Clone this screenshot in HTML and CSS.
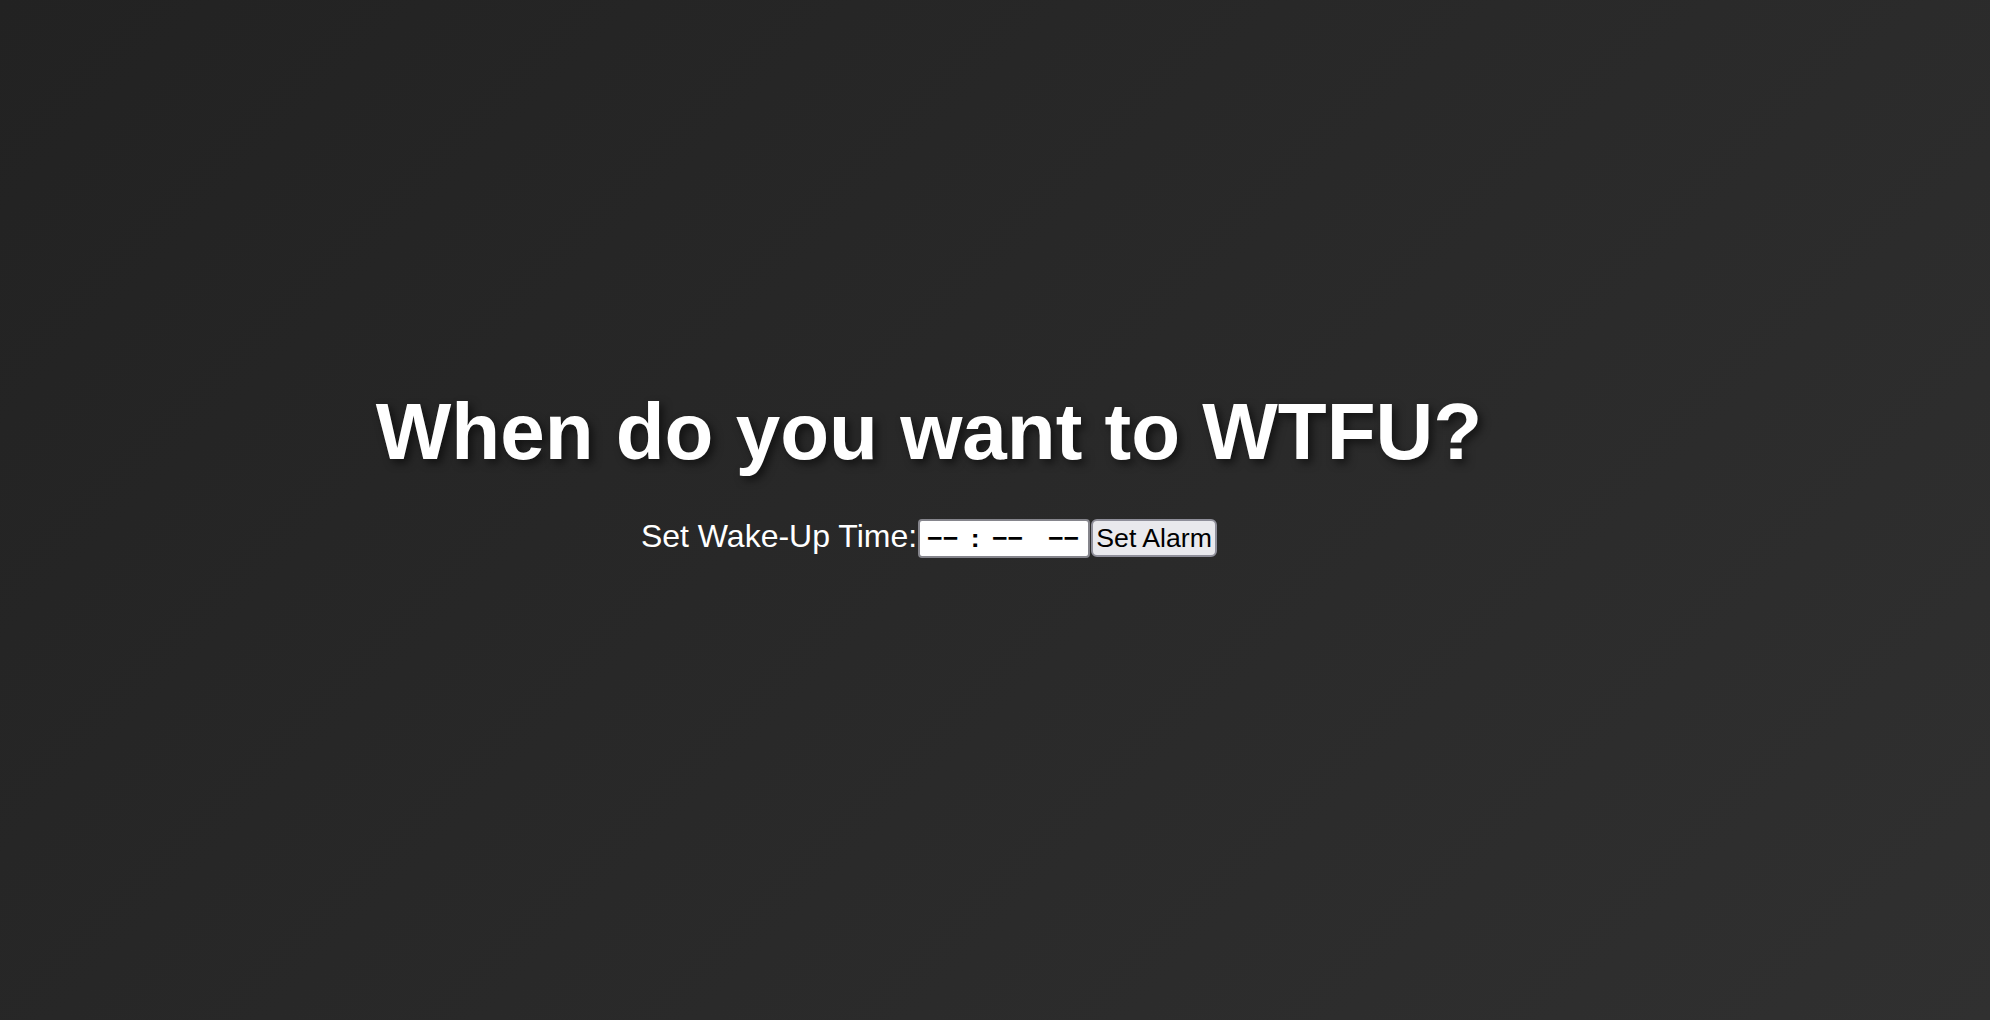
FILE: index.html
```html
<!DOCTYPE html>
<html lang="en">
<head>
<meta charset="utf-8">
<title>WTFU</title>
<link rel="stylesheet" href="styles.css">
</head>
<body>
<main class="page">
  <h1 class="title">When do you want to WTFU?</h1>
  <form class="alarm-form"><label class="alarm-label" for="wake-time">Set Wake-Up Time:</label><input class="time-input" id="wake-time" type="text" value="−− : −−  −−" readonly><button class="alarm-button" type="button">Set Alarm</button></form>
</main>
</body>
</html>
```
FILE: styles.css
```css
html, body {
  margin: 0;
  padding: 0;
}

body {
  min-height: 100vh;
  background: linear-gradient(135deg, #222222 0%, #303030 100%);
  font-family: "Liberation Sans", Arial, Helvetica, sans-serif;
  color: #ffffff;
}

.page {
  width: 1858px;
  padding-top: 386px;
  display: flex;
  flex-direction: column;
  align-items: center;
}

.title {
  margin: 0 0 40px 0;
  font-size: 80px;
  font-weight: 700;
  line-height: normal;
  color: #ffffff;
  text-shadow: 4px 4px 8px rgba(0, 0, 0, 0.55);
}

.alarm-form {
  display: flex;
  align-items: baseline;
  margin: 0;
}

.alarm-label {
  font-size: 32px;
  color: #ffffff;
  margin-right: 1px;
}

.time-input {
  box-sizing: border-box;
  width: 172px;
  height: 39px;
  padding: 0 0 0 7px;
  border: 2px solid #85858c;
  border-radius: 4px;
  background: #ffffff;
  color: #000000;
  font-family: "Liberation Sans", Arial, sans-serif;
  font-size: 26.67px;
  font-weight: 700;
  word-spacing: 5px;
  outline: none;
}

.alarm-button {
  box-sizing: border-box;
  width: 126px;
  height: 38px;
  margin-left: 1px;
  padding: 0 2px;
  border: 2px solid #8f8f9a;
  border-radius: 6px;
  background: #e9e9ed;
  color: #000000;
  font-family: "Liberation Sans", Arial, sans-serif;
  font-size: 26.67px;
  line-height: 1;
}
```
